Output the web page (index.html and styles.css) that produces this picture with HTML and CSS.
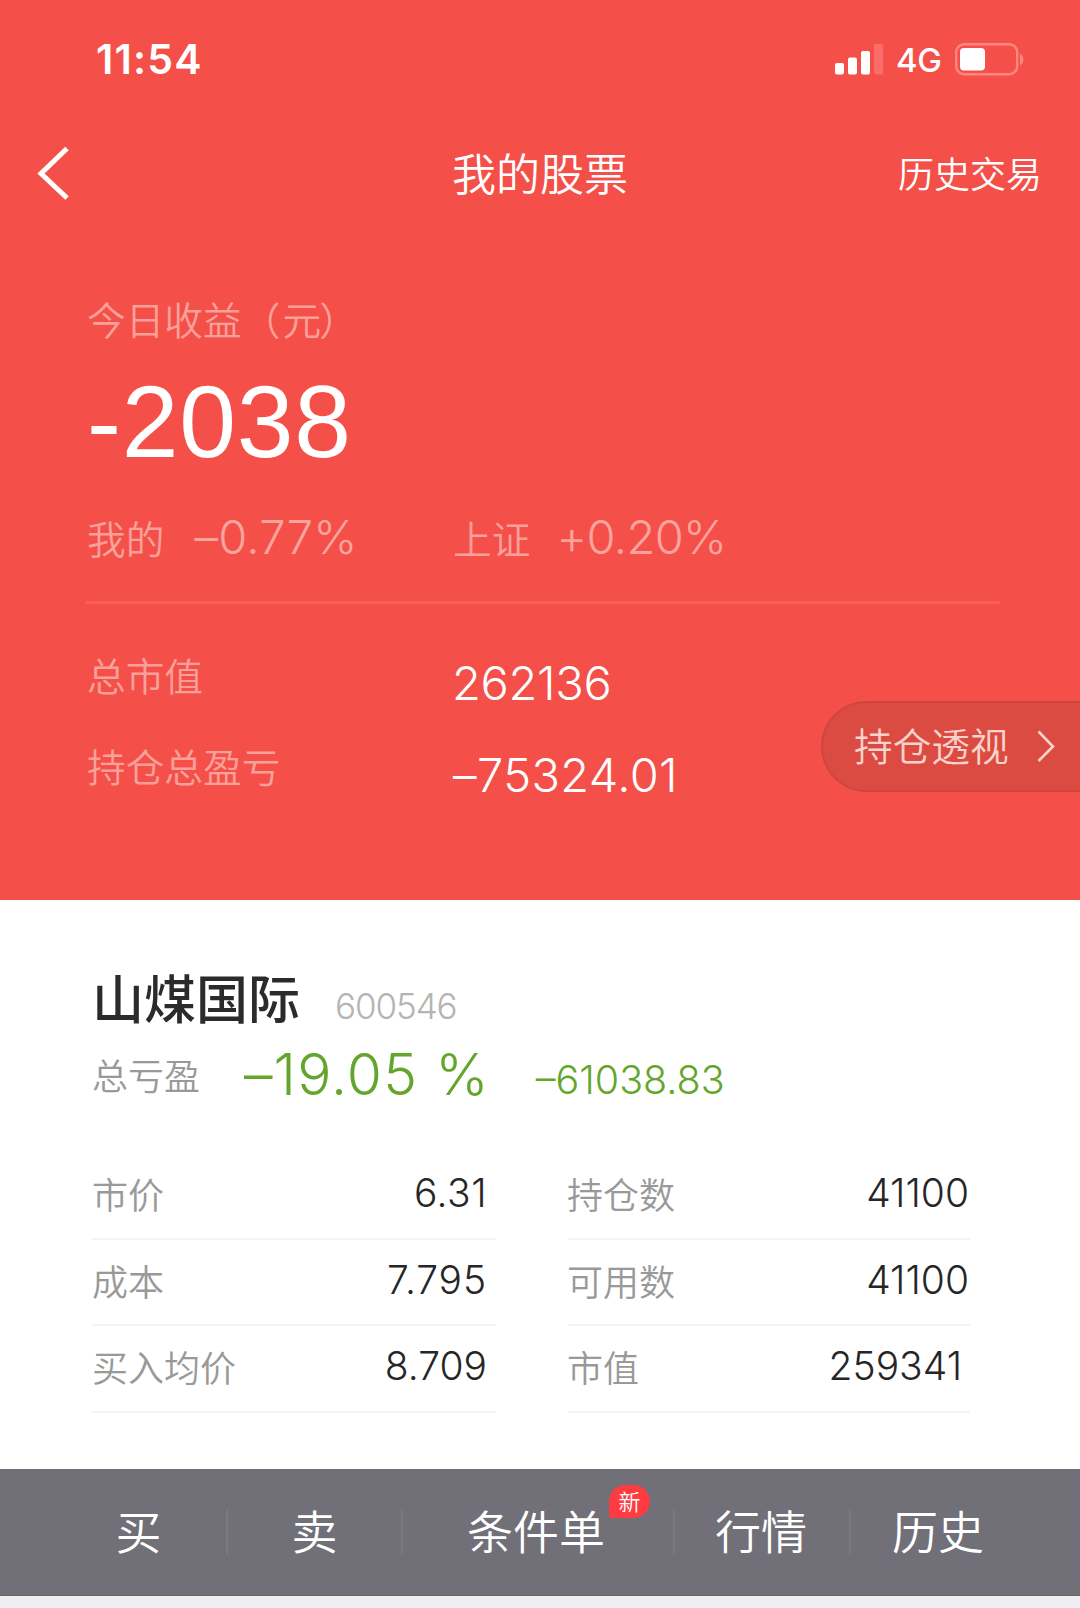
FILE: index.html
```html
<!DOCTYPE html>
<html lang="zh-CN">
<head>
<meta charset="utf-8">
<title>我的股票</title>
<link rel="stylesheet" href="styles.css">
</head>
<body>
<div class="app">
  <header class="hero">
    <div class="status">
      <span class="time">11:54</span>
      <div class="status-icons">
        <svg class="signal" width="49" height="32" viewBox="0 0 49 32"><g fill="#fff"><rect x="0" y="20" width="9" height="11.500" rx="2"/><rect x="13" y="14.500" width="9" height="17" rx="2"/><rect x="26" y="8" width="9" height="23.500" rx="2"/></g><rect x="39" y="1" width="9" height="30.500" rx="2" fill="#fc6c6b"/></svg>
        <span class="network">4G</span>
        <svg class="battery" width="70" height="34" viewBox="0 0 70 34"><rect x="2.200" y="2.200" width="61" height="30" rx="8" fill="none" stroke="#fc8780" stroke-width="2.400"/><rect x="6" y="6" width="25" height="22.500" rx="4" fill="#fff"/><path d="M66 11.500c4.500 2.500 4.500 9.500 0 12z" fill="#fc8780"/></svg>
      </div>
    </div>
    <nav class="nav">
      <svg class="back" width="36" height="56" viewBox="0 0 36 56"><path d="M33 3.500L7 28.500l26 24.500" fill="none" stroke="#fff" stroke-width="5"/></svg>
      <h1 class="title">我的股票</h1>
      <span class="history">历史交易</span>
    </nav>
    <section class="summary">
      <div class="label today-label">今日收益（<span class="unit">元</span>）</div>
      <div class="today">-2038</div>
      <div class="rates">
        <div class="rate"><span class="label">我的</span><span class="num pct">–0.77%</span></div>
        <div class="rate"><span class="label">上证</span><span class="num pct up">+0.20%</span></div>
      </div>
      <div class="rule"></div>
      <div class="totals">
        <span class="label">总市值</span><span class="num total">262136</span>
        <span class="label">持仓总盈亏</span><span class="num total loss">–75324.01</span>
      </div>
    </section>
    <div class="insight">
      <span>持仓透视</span>
      <svg width="20" height="34" viewBox="0 0 20 34"><path d="M2.500 2.500L17 17.500 2.500 32" fill="none" stroke="#f8d2cc" stroke-width="2.600"/></svg>
    </div>
  </header>
  <main class="stock">
    <div class="name-row"><h2 class="name">山煤国际</h2><span class="num code">600546</span></div>
    <div class="pl-row"><span class="key">总亏盈</span><span class="num pl-pct">–19.05 %</span><span class="num pl-val">–61038.83</span></div>
    <div class="grid">
      <div class="cell"><span class="key">市价</span><span class="num val price">6.31</span></div>
      <div class="cell"><span class="key">持仓数</span><span class="num val ones">41100</span></div>
      <div class="cell"><span class="key">成本</span><span class="num val cost">7.795</span></div>
      <div class="cell"><span class="key">可用数</span><span class="num val ones">41100</span></div>
      <div class="cell"><span class="key">买入均价</span><span class="num val">8.709</span></div>
      <div class="cell"><span class="key">市值</span><span class="num val market">259341</span></div>
    </div>
  </main>
  <footer class="tabs">
    <span class="tab buy">买</span>
    <span class="tab sell">卖</span>
    <span class="tab order">条件单<i class="badge">新</i></span>
    <span class="tab quote">行情</span>
    <span class="tab past">历史</span>
  </footer>
</div>
</body>
</html>
```

FILE: styles.css
```css
* { box-sizing: border-box; }
body {
  margin: 0;
  background: #efeef0;
  font-family: "Noto Sans CJK SC", sans-serif;
  font-weight: 350;
  color: #fff;
}
.app { width: 1080px; height: 1608px; display: flex; flex-direction: column; overflow: hidden; }
.num { font-family: Inter, sans-serif; font-weight: 300; white-space: nowrap; }
h1, h2 { margin: 0; }
svg { display: block; flex: none; }

.hero { position: relative; height: 900px; background: #f45049; }
.status { height: 118px; padding: 0 56px 0 96px; display: flex; align-items: center; justify-content: space-between; }
.time { font: 600 41px/50px Inter, sans-serif; letter-spacing: 1.200px; }
.status-icons { display: flex; align-items: center; }
.network { width: 48px; margin: 2px 10px 0 12px; font: 500 33px/40px Inter, sans-serif; letter-spacing: -0.5px; }
.nav { height: 105px; padding: 0 38px 0 34px; display: grid; grid-template-columns: 1fr auto 1fr; align-items: center; }
.back { margin-top: 5px; }
.title { margin: 2px 0 0 4px; font-weight: 350; font-size: 44px; line-height: 60px; }
.history { margin-top: 2px; justify-self: end; font-size: 36px; line-height: 50px; }

.summary { padding: 70px 80px 0 86px; }
.label { font-size: 38.700px; line-height: 50px; color: #faa09a; white-space: nowrap; font-weight: 350; }
.today-label, .rate .label, .totals .label { padding-left: 1px; }
.unit { margin: 0 -2px 0 2px; }
.today { height: 110px; margin: 24px 0 0 1px; font: 400 102px/110px "Liberation Sans", sans-serif; letter-spacing: 0.800px; }
.rates { height: 60px; margin-top: 30px; display: grid; grid-template-columns: 366px 1fr; align-items: center; }
.rate { display: flex; align-items: center; }
.pct { margin-left: 30px; font-size: 47px; line-height: 60px; color: #fba49e; letter-spacing: 0.300px; }
.up { margin-left: 26px; letter-spacing: -0.600px; }
.rule { height: 3px; margin-top: 34px; background: #fa5f59; }
.totals { margin-top: 34px; display: grid; grid-template-columns: 366px 1fr; grid-auto-rows: 91px; align-items: center; }
.totals .label { margin-bottom: 19px; }
.total { margin-top: -1px; font-size: 47px; line-height: 60px; letter-spacing: -0.300px; }
.loss { margin-top: 0; padding-left: 1px; letter-spacing: 0.400px; }
.insight {
  position: absolute; right: 0; top: 701px; width: 259px; height: 91px;
  padding: 0 24px 5px 31px; display: flex; align-items: center; justify-content: space-between;
  border: 2px solid #cf463f; border-right: 0; border-radius: 46px 0 0 46px;
  background: #dc4b42; color: #f8d2cc; font-size: 38.700px;
}
.insight svg { margin-top: 3px; }

.stock { height: 569px; padding: 62px 110px 0 92px; background: #fff; }
.name-row { height: 70px; display: flex; align-items: center; }
.name { font-size: 52px; line-height: 70px; font-weight: 500; color: #2b2b2b; }
.code { margin: 17px 0 0 35px; font-size: 35px; line-height: 40px; color: #b4b4b4; letter-spacing: -1.100px; }
.key { font-size: 36px; line-height: 50px; color: #999; white-space: nowrap; }
.pl-row { height: 82px; padding-top: 2px; display: flex; align-items: center; color: #64a52b; }
.pl-pct { margin: 2px 0 0 44px; font-size: 57px; line-height: 70px; letter-spacing: 1.100px; }
.pl-val { margin: 11px 0 0 46px; font-size: 39.500px; line-height: 50px; letter-spacing: 0; }
.grid { margin-top: 39px; display: grid; grid-template-columns: 404px 402px; column-gap: 72px; }
.cell { height: 86.500px; padding-bottom: 4px; display: flex; align-items: center; justify-content: space-between; border-bottom: 2px solid #f3f3f3; }
.cell:nth-child(even) .key { margin-left: -1px; }
.val { padding-right: 9px; font-size: 39px; line-height: 50px; color: #262626; font-weight: 350; }
.price { letter-spacing: 0.500px; }
.cost { letter-spacing: 0.900px; }
.ones { padding-right: 1px; }
.market { padding-right: 8px; }

.tabs { height: 127px; padding-left: 52px; display: flex; align-items: center; background: #716f77; border-bottom: 1px solid #67656c; }
.tab { position: relative; height: 44px; font-size: 46px; line-height: 38px; font-weight: 350; text-align: center; border-right: 2px solid #7b7a7f; }
.buy { width: 176px; padding-right: 1px; }
.sell { width: 175px; }
.order { width: 272px; padding-right: 4px; }
.quote { width: 176px; padding-right: 2px; }
.past { width: 176px; padding-right: 2px; border-right: 0; }
.badge {
  position: absolute; left: 206px; top: -25px; width: 41px; height: 33px;
  border-radius: 18px 18px 18px 3px; background: #fd3b40;
  font-style: normal; font-size: 22px; line-height: 31px; color: #fff;
}
```
